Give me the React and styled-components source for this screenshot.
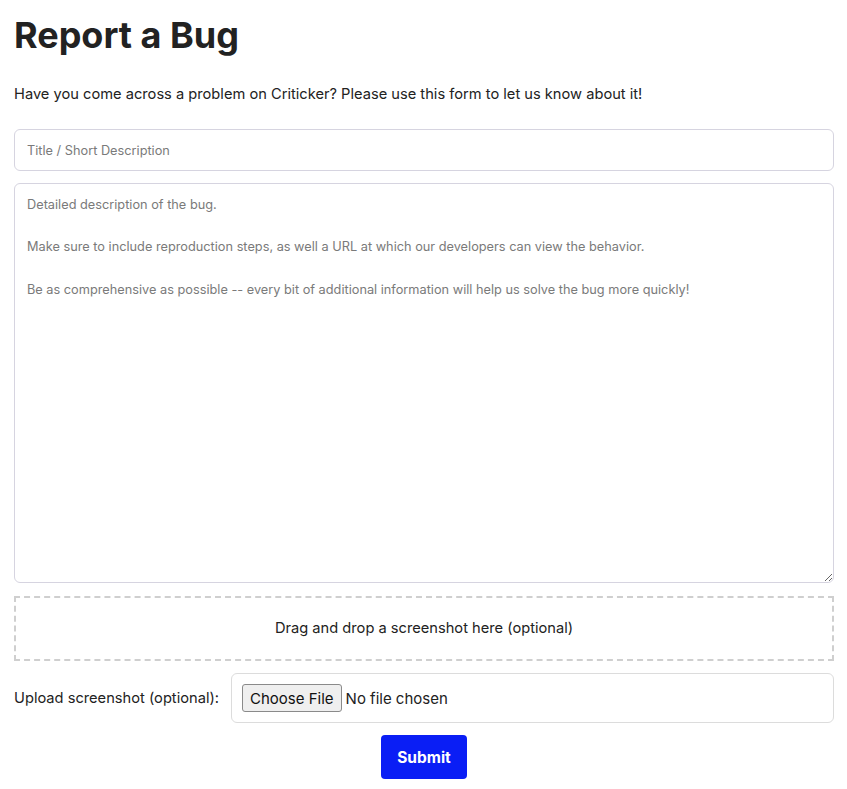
import React from "react";
import styled, { createGlobalStyle } from "styled-components";

const Global = createGlobalStyle`
  html, body { margin: 0; padding: 0; background: #fff; }
  body { font-family: Inter, "Noto Sans", sans-serif; color: #222; }
  * { box-sizing: border-box; }
`;

const Page = styled.div`
  padding: 0 13px 0 14px;
`;

const Heading = styled.h1`
  font-size: 36px;
  font-weight: 700;
  color: #222;
  margin: 13px 0 0;
  line-height: 44px;
`;

const Intro = styled.p`
  font-size: 11pt;
  margin: 27px 0 25px;
  line-height: 20px;
  color: #222;
`;

const Form = styled.form`
  display: flex;
  flex-direction: column;
  gap: 12px;
`;

const fieldBase = `
  width: 100%;
  border: 1px solid #d6d4e0;
  border-radius: 6px;
  font-family: Inter, "Noto Sans", sans-serif;
  font-size: 12.75px;
  color: #222;
  background: #fff;
  padding: 0 12px;
  outline: none;
  &::placeholder { color: #7a7a7a; opacity: 1; }
`;

const TextInput = styled.input`
  ${fieldBase}
  height: 42px;
`;

const TextArea = styled.textarea`
  ${fieldBase}
  height: 400px;
  padding: 10px 12px;
  line-height: 1.666;
  resize: vertical;
  display: block;
`;

const DropZone = styled.div`
  margin-top: 1px;
  height: 65px;
  padding-bottom: 1px;
  border: 2px dashed #cfcfcf;
  display: flex;
  align-items: center;
  justify-content: center;
  font-size: 11pt;
  color: #222;
`;

const UploadRow = styled.div`
  display: flex;
  align-items: center;
  gap: 12px;
`;

const UploadLabel = styled.label`
  font-size: 11pt;
  color: #222;
  white-space: nowrap;
`;

const FileBox = styled.div`
  flex: 1;
  height: 50px;
  border: 1px solid #dcdcdc;
  border-radius: 6px;
  display: flex;
  align-items: center;
  padding: 0 10px;
`;

const FileInput = styled.input`
  font-family: Inter, "Noto Sans", sans-serif;
  font-size: 15px;
  color: #222;
  &::file-selector-button {
    font-family: Inter, "Noto Sans", sans-serif;
    font-size: 15px;
    color: #111;
    height: 28px;
    padding: 0 7px;
    margin-right: 4px;
    background: #efefef;
    border: 1px solid #8a8a8a;
    border-radius: 3px;
  }
`;

const SubmitRow = styled.div`
  display: flex;
  justify-content: center;
`;

const SubmitButton = styled.button`
  background: #0a1ef5;
  color: #fff;
  border: none;
  border-radius: 4px;
  width: 86px;
  height: 44px;
  font-family: Inter, "Noto Sans", sans-serif;
  font-size: 15.5px;
  font-weight: 700;
  cursor: pointer;
`;

export default function App() {
  return (
    <>
      <Global />
      <Page>
        <Heading>Report a Bug</Heading>
        <Intro>Have you come across a problem on Criticker? Please use this form to let us know about it!</Intro>
        <Form onSubmit={(e) => e.preventDefault()}>
          <TextInput placeholder="Title / Short Description" />
          <TextArea
            placeholder={
              "Detailed description of the bug.\n\nMake sure to include reproduction steps, as well a URL at which our developers can view the behavior.\n\nBe as comprehensive as possible -- every bit of additional information will help us solve the bug more quickly!"
            }
          />
          <DropZone>Drag and drop a screenshot here (optional)</DropZone>
          <UploadRow>
            <UploadLabel htmlFor="shot">Upload screenshot (optional):</UploadLabel>
            <FileBox>
              <FileInput id="shot" type="file" />
            </FileBox>
          </UploadRow>
          <SubmitRow>
            <SubmitButton type="submit">Submit</SubmitButton>
          </SubmitRow>
        </Form>
      </Page>
    </>
  );
}
